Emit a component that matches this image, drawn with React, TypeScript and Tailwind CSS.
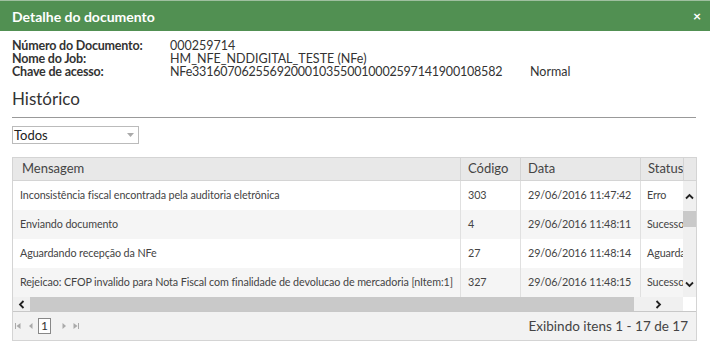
import React from "react";

const rows = [
  { msg: "Inconsistência fiscal encontrada pela auditoria eletrônica", cod: "303", data: "29/06/2016 11:47:42", status: "Erro" },
  { msg: "Enviando documento", cod: "4", data: "29/06/2016 11:48:11", status: "Sucesso" },
  { msg: "Aguardando recepção da NFe", cod: "27", data: "29/06/2016 11:48:14", status: "Aguardando" },
  { msg: "Rejeicao: CFOP invalido para Nota Fiscal com finalidade de devolucao de mercadoria [nItem:1]", cod: "327", data: "29/06/2016 11:48:15", status: "Sucesso" },
];

export default function App() {
  return (
    <div className="w-[710px] h-[346px] bg-white overflow-hidden text-[#333]" style={{ fontFamily: "Lato, 'Open Sans', sans-serif" }}>
      {/* header */}
      <div className="h-[31px] bg-[#519052] border-t border-[#9fbf9f] flex items-center justify-between pl-3 pr-[9px]">
        <span className="text-white font-bold text-[14px]">Detalhe do documento</span>
        <span className="text-white font-bold text-[14px] leading-none">×</span>
      </div>

      <div className="px-3 pt-[8px]">
        <div className="text-[12.5px] leading-[13px]">
          <div className="flex h-[13px]">
            <span className="w-[158px] font-bold tracking-[-0.2px]">Número do Documento:</span>
            <span>000259714</span>
          </div>
          <div className="flex h-[13px]">
            <span className="w-[158px] font-bold tracking-[-0.2px]">Nome do Job:</span>
            <span>HM_NFE_NDDIGITAL_TESTE (NFe)</span>
          </div>
          <div className="flex h-[13px]">
            <span className="w-[158px] font-bold tracking-[-0.2px]">Chave de acesso:</span>
            <span className="w-[360px] tracking-[-0.2px]">NFe33160706255692000103550010002597141900108582</span>
            <span>Normal</span>
          </div>
        </div>

        <div className="text-[17px] leading-[20px] mt-[11px] w-[684px] border-b border-[#999] pb-[8px]">Histórico</div>

        <div className="mt-[8px] w-[127px] h-[18px] border border-[#bbb] flex items-center justify-between pl-[1px] pr-[4px]">
          <span className="text-[13px] leading-none text-[#222]">Todos</span>
          <svg width="7" height="4" viewBox="0 0 7 4"><path d="M0 0h7L3.5 4z" fill="#aaa" /></svg>
        </div>

        {/* table */}
        <div className="mt-[13px] w-[685px] border border-[#d4d4d4]">
          <div className="flex h-[23px] bg-[#e8e8e8] border-b border-[#d4d4d4] text-[13px] text-[#444] items-stretch">
            <div className="w-[447px] pl-[9px] flex items-center">Mensagem</div>
            <div className="w-[60px] border-l border-[#d4d4d4] pl-[7px] flex items-center">Código</div>
            <div className="w-[120px] border-l border-[#d4d4d4] pl-[7px] flex items-center">Data</div>
            <div className="w-[43px] border-l border-[#d4d4d4] pl-[7px] flex items-center overflow-hidden whitespace-nowrap">Status</div>
            <div className="w-[13px] border-l border-[#d4d4d4]"></div>
          </div>
          <div className="flex">
            <div className="w-[670px]">
              {rows.map((r, i) => (
                <div key={i} className={`flex h-[29px] text-[10.75px] tracking-[-0.1px] text-[#444] ${i % 2 === 1 ? "bg-[#f5f5f5]" : "bg-white"}`}>
                  <div className="w-[447px] pl-[7px] flex items-center whitespace-nowrap overflow-hidden">{r.msg}</div>
                  <div className="w-[60px] border-l border-[#e0e0e0] pl-[7px] flex items-center">{r.cod}</div>
                  <div className="w-[120px] border-l border-[#e0e0e0] pl-[7px] flex items-center whitespace-nowrap">{r.data}</div>
                  <div className="w-[43px] border-l border-[#e0e0e0] pl-[6px] flex items-center whitespace-nowrap overflow-hidden">{r.status}</div>
                </div>
              ))}
              {/* horizontal scrollbar */}
              <div className="h-[14px] bg-[#f0f0f0] flex items-center">
                <div className="w-[17px] flex justify-center">
                  <svg width="7" height="9" viewBox="0 0 7 9"><path d="M5.5 1L2 4.5L5.5 8" stroke="#222" strokeWidth="1.8" fill="none" /></svg>
                </div>
                <div className="w-[604px] h-[14px] bg-[#c9c9c9]"></div>
                <div className="flex-1 flex justify-center">
                  <svg width="7" height="9" viewBox="0 0 7 9"><path d="M1.5 1L5 4.5L1.5 8" stroke="#222" strokeWidth="1.8" fill="none" /></svg>
                </div>
              </div>
            </div>
            {/* vertical scrollbar */}
            <div className="w-[13px] flex flex-col">
              <div className="h-[116px] bg-[#f0f0f0] flex flex-col items-center">
                <div className="h-[30px] flex items-center">
                  <svg width="9" height="7" viewBox="0 0 9 7"><path d="M1 5.5L4.5 2L8 5.5" stroke="#222" strokeWidth="1.8" fill="none" /></svg>
                </div>
                <div className="w-[13px] h-[16px] bg-[#c9c9c9]"></div>
                <div className="flex-1"></div>
                <div className="h-[26px] flex items-center">
                  <svg width="9" height="7" viewBox="0 0 9 7"><path d="M1 1.5L4.5 5L8 1.5" stroke="#222" strokeWidth="1.8" fill="none" /></svg>
                </div>
              </div>
              <div className="flex-1 bg-white"></div>
            </div>
          </div>
          {/* pager */}
          <div className="h-[29px] bg-[#f2f2f2] border-t border-[#c8c8c8] flex items-center pl-[1px] pr-[8px]">
            <div className="flex items-center">
              <svg width="8" height="10" viewBox="0 0 8 10"><path d="M1.5 2v6" stroke="#aaa" strokeWidth="1" /><path d="M6.5 2v6L2.5 5z" fill="#aaa" /></svg>
              <svg width="8" height="10" viewBox="0 0 8 10" className="ml-[5px]"><path d="M5.5 2v6L2 5z" fill="#aaa" /></svg>
              <div className="ml-[3px] w-[13px] h-[16px] border border-[#888] bg-white text-[12px] text-[#333] flex items-center justify-center leading-none">1</div>
              <svg width="8" height="10" viewBox="0 0 8 10" className="ml-[9px]"><path d="M2.5 2v6L6 5z" fill="#aaa" /></svg>
              <svg width="8" height="10" viewBox="0 0 8 10" className="ml-[4px]"><path d="M1.5 2v6L5.5 5z" fill="#aaa" /><path d="M6.5 2v6" stroke="#aaa" strokeWidth="1" /></svg>
            </div>
            <div className="flex-1"></div>
            <span className="text-[13.5px] text-[#444]">Exibindo itens 1 - 17 de 17</span>
          </div>
        </div>
      </div>
    </div>
  );
}
